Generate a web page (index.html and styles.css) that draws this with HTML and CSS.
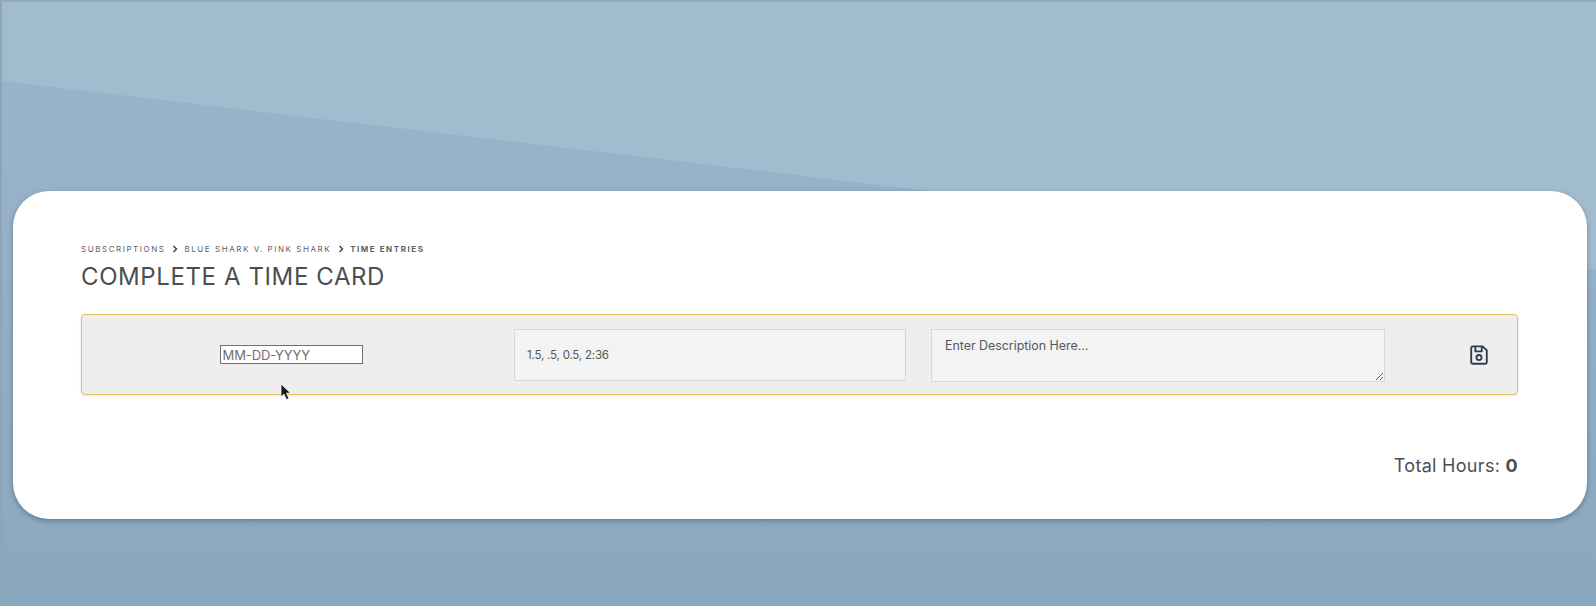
FILE: index.html
```html
<!DOCTYPE html>
<html>
<head>
    <title>Time Entries</title>
    <link rel="stylesheet" href="styles.css">
</head>
<body>
    <div class="backdrop"></div>

    <div class="card">
        <div class="breadcrumbs">
            <span>Subscriptions</span>
            <svg class="crumb-sep" viewBox="0 0 6 8"><path d="M1.5 1 L4.5 4 L1.5 7" /></svg>
            <span>Blue Shark v. Pink Shark</span>
            <svg class="crumb-sep" viewBox="0 0 6 8"><path d="M1.5 1 L4.5 4 L1.5 7" /></svg>
            <span class="current">Time Entries</span>
        </div>
        <h1 class="title">Complete a Time Card</h1>

        <form class="entry-row">
            <div class="date-cell">
                <input class="date-input" type="text" placeholder="MM-DD-YYYY">
            </div>
            <input class="hours-input" type="text" placeholder="1.5, .5, 0.5, 2:36">
            <textarea class="desc-input" placeholder="Enter Description Here..."></textarea>
            <div class="save-cell">
                <svg class="save-icon" viewBox="0 0 24 24">
                    <path d="M5.5 2.5h10.5L20.5 7v12.5a2 2 0 0 1-2 2h-13a2 2 0 0 1-2-2v-15a2 2 0 0 1 2-2z" />
                    <path d="M8 2.5v5.5h7V2.5" />
                    <circle cx="12" cy="14.8" r="2.8" />
                </svg>
            </div>
        </form>

        <div class="total">Total Hours: <strong>0</strong></div>
    </div>

    <svg class="cursor" viewBox="0 0 12 18">
        <path d="M1 1 L1 14 L4 11.2 L6.5 16.5 L9 15.5 L6.4 10.2 L10.5 10 Z" />
    </svg>
</body>
</html>
```

FILE: styles.css
```css
* {
    margin: 0;
    padding: 0;
    box-sizing: border-box;
    font-family: Inter, "Noto Sans", Arial, sans-serif;
}

html, body {
    height: 100%;
    overflow: hidden;
}

body {
    position: relative;
    background: linear-gradient(180deg, #9ab4cb 0%, #96b1c8 35%, #89a7be 100%);
    border-top: 2px solid #93a9ba;
    border-left: 2px solid #8ea5b6;
    padding: 189px 9px 0 11px;
}

.backdrop {
    position: absolute;
    inset: 0;
    background: #a2bccf;
    clip-path: polygon(0 79px, 100% 268px, 100% 0, 0 0);
}

.card {
    position: relative;
    height: 328px;
    padding: 53px 69px 0 68px;
    background-color: #ffffff;
    border-radius: 36px;
    box-shadow: 0 2px 5px rgba(50,70,90,0.45);
}

.breadcrumbs {
    display: flex;
    align-items: center;
    gap: 6.5px;
    font-size: 8px;
    line-height: 10px;
    color: #5c5f63;
    text-transform: uppercase;
    letter-spacing: 1.55px;
}

.current {
    font-weight: 700;
}

.crumb-sep {
    width: 6px;
    height: 8px;
    fill: none;
    stroke: #44484d;
    stroke-width: 1.5;
}

.title {
    margin-top: 8px;
    font-size: 24px;
    line-height: 30px;
    font-weight: 400;
    letter-spacing: 0.6px;
    color: #4c4e51;
    text-transform: uppercase;
}

.entry-row {
    display: flex;
    align-items: center;
    height: 81px;
    margin-top: 22px;
    background-color: #eeeeef;
    border: 1px solid #dfc25f;
    border-radius: 4px;
    box-shadow: 0 1px 3px rgba(0,0,0,0.1);
}

.date-cell {
    display: flex;
    justify-content: center;
    width: 418px;
    margin-right: 14px;
}

.date-input {
    width: 143px;
    height: 19px;
    padding: 0 2px;
    font-size: 13px;
    letter-spacing: -0.1px;
    color: #444;
    background-color: #ffffff;
    border: 1px solid #6f6f6f;
    outline: none;
}

.date-input::placeholder {
    color: #6f6f6f;
}

.hours-input {
    width: 392px;
    height: 52px;
    padding: 0 12px;
    font-size: 11.5px;
    letter-spacing: -0.2px;
    background-color: #f3f3f3;
    border: 1px solid #d6d8d8;
    outline: none;
}

.desc-input {
    width: 454px;
    height: 53px;
    margin: 2px 0 0 25px;
    padding: 8px 13px;
    font-size: 12.4px;
    line-height: 15px;
    background-color: #f3f3f3;
    border: 1px solid #d6d8d8;
    outline: none;
}

.hours-input::placeholder,
.desc-input::placeholder {
    color: #55585b;
    opacity: 1;
}

.save-cell {
    display: flex;
    justify-content: center;
    flex: 1;
    padding-left: 55px;
}

.save-icon {
    width: 22px;
    height: 22px;
    fill: none;
    stroke: #2f3a52;
    stroke-width: 2;
    stroke-linejoin: round;
}

.total {
    margin-top: 59px;
    text-align: right;
    font-size: 18px;
    line-height: 24px;
    letter-spacing: 0.3px;
    color: #4c4e51;
}

.total strong {
    font-weight: 700;
}

.cursor {
    position: absolute;
    left: 278px;
    top: 381px;
    width: 12px;
    height: 18px;
    fill: #16181c;
    stroke: #f2f2f2;
    stroke-width: 0.8;
}
```
